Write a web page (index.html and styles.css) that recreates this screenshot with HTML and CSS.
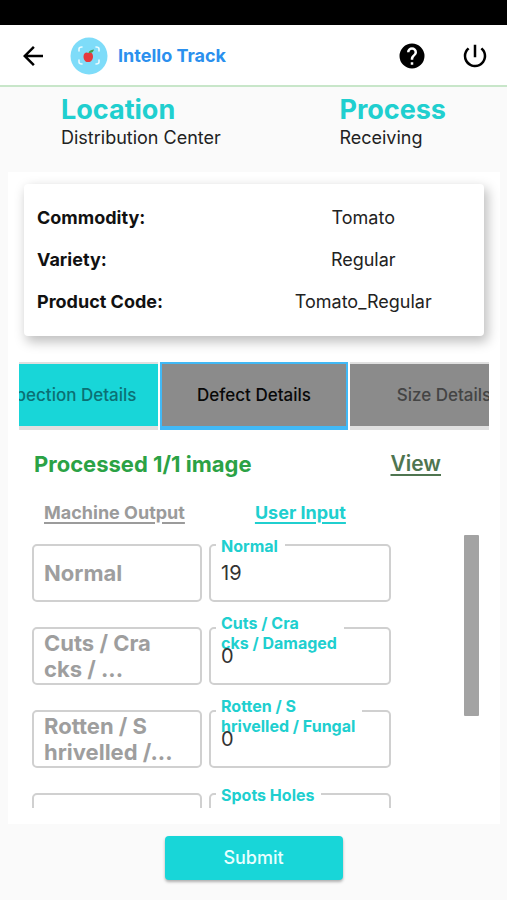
FILE: index.html
```html
<!DOCTYPE html>
<html lang="en">
<head>
<meta charset="utf-8">
<meta name="viewport" content="width=device-width, initial-scale=1">
<title>Intello Track</title>
<link rel="stylesheet" href="styles.css">
</head>
<body>
<div class="status-bar"></div>
<header class="app-bar">
  <button class="icon-button" type="button" aria-label="Back">
    <svg width="30" height="30" viewBox="0 0 24 24"><path d="M20 11H7.800l5.600-5.600L12 4l-8 8 8 8 1.400-1.400L7.800 13H20z"/></svg>
  </button>
  <svg class="logo" width="38" height="38" viewBox="0 0 38 38" aria-hidden="true">
    <circle cx="19" cy="19" r="18.500" fill="#7edcf9"/>
    <g fill="none" stroke="#e9fbff" stroke-width="1.600" stroke-linecap="round">
      <path d="M9 14v-2q0-2 3-2M26 10q3 0 3 2v2M9 23v2q0 2 3 2M26 27q3 0 3-2v-2"/>
    </g>
    <path d="M18.500 16c-2-1.200-5-.4-5 3.500 0 3.500 2.500 6 4.500 5.500 2.500.5 5-2 5-5.500 0-3.900-2.500-4.700-4.500-3.500z" fill="#e5393d"/>
    <path d="M18.500 16q.3-3 5.500-3.500-1 4-5.500 3.500z" fill="#43a047"/>
  </svg>
  <h1 class="brand">Intello Track</h1>
  <button class="icon-button" type="button" aria-label="Help">
    <svg width="30" height="30" viewBox="0 0 24 24"><path d="M12 2a10 10 0 1 0 0 20 10 10 0 0 0 0-20zm1 17h-2v-2h2zm2.070-7.750-.9.920C13.450 12.900 13 13.500 13 15h-2v-.5c0-1.100.45-2.100 1.170-2.830l1.240-1.260c.37-.36.59-.86.59-1.410a2 2 0 0 0-4 0H8a4 4 0 0 1 8 0c0 .880-.36 1.680-.93 2.250z"/></svg>
  </button>
  <button class="icon-button" type="button" aria-label="Log out">
    <svg width="30" height="30" viewBox="0 0 24 24"><path d="M13 3h-2v10h2zm4.830 2.170-1.420 1.420A6.920 6.920 0 0 1 19 12a7 7 0 1 1-11.420-5.420L6.170 5.170A8.930 8.930 0 0 0 3 12a9 9 0 1 0 14.830-6.830z"/></svg>
  </button>
</header>

<section class="context">
  <div><h2>Location</h2><p>Distribution Center</p></div>
  <div><h2>Process</h2><p>Receiving</p></div>
</section>

<main class="panel">
  <dl class="product">
    <dt>Commodity:</dt><dd>Tomato</dd>
    <dt>Variety:</dt><dd>Regular</dd>
    <dt>Product Code:</dt><dd>Tomato_Regular</dd>
  </dl>

  <nav class="tabs">
    <button class="tab tab-done" type="button">Inspection Details</button>
    <button class="tab tab-active" type="button">Defect Details</button>
    <button class="tab" type="button">Size Details</button>
  </nav>

  <div class="progress"><strong>Processed 1/1 image</strong><a href="#view">View</a></div>
  <div class="columns"><span>Machine Output</span><span class="user">User Input</span></div>

  <div class="scroller">
    <div class="fields">
      <div class="output"><span>Normal</span></div>
      <div class="field"><label for="normal">Normal</label><input id="normal" value="19"></div>
      <div class="output"><span>Cuts / Cra<br>cks / ...</span></div>
      <div class="field"><label class="tall" for="cuts">Cuts / Cra<br>cks / Damaged</label><input id="cuts" value="0"></div>
      <div class="output"><span>Rotten / S<br>hrivelled /...</span></div>
      <div class="field"><label class="tall" for="rotten">Rotten / S<br>hrivelled / Fungal</label><input id="rotten" value="0"></div>
      <div class="output"></div>
      <div class="field"><label for="spots">Spots Holes</label><input id="spots"></div>
    </div>
    <div class="thumb"></div>
  </div>
</main>

<footer class="actions"><button class="submit" type="submit">Submit</button></footer>
</body>
</html>
```
FILE: styles.css
```css
* { box-sizing: border-box; }
body {
  margin: 0;
  min-height: 100vh;
  display: flex;
  flex-direction: column;
  background: #fafafa;
  color: #222;
  font-family: Inter, "Liberation Sans", sans-serif;
  font-size: 18px;
  line-height: 24px;
}
h1, h2, p, dl, dd { margin: 0; }
button { font: inherit; border: 0; padding: 0; }

.status-bar { height: 25px; background: #000; }
.app-bar {
  display: flex;
  align-items: center;
  height: 62px;
  padding: 2px 17px 0 18px;
  background: #fff;
  border-bottom: 2px solid #c8e6c9;
}
.icon-button { display: flex; justify-content: center; width: 30px; background: none; }
.icon-button + .icon-button { margin-left: 33px; }
.logo { margin: 0 10px 0 22px; }
.brand { flex: 1; font-size: 18px; font-weight: 700; color: #2b90ee; }

.context {
  display: flex;
  justify-content: space-between;
  padding: 7px 61px 0;
}
.context h2 { font-size: 27px; line-height: 32px; font-weight: 700; color: #20cfcf; }

.panel { margin: 22px 7px 0 8px; padding: 12px 11px 16px; background: #fff; }
.product {
  display: grid;
  grid-template-columns: 1fr 1fr;
  align-items: center;
  margin: 0 5px;
  padding: 13px 12px 13px 13px;
  grid-auto-rows: 42px;
  border-radius: 4px;
  background: #fff;
  box-shadow: 3px 5px 12px 1px rgba(0, 0, 0, .25);
}
.product dt { font-weight: 700; color: #111; }
.product dd { text-align: center; }

.tabs { display: flex; justify-content: center; gap: 2px; margin-top: 26px; overflow: hidden; }
.tab {
  flex: 0 0 188px;
  height: 68px;
  border: solid #e0e0e0;
  border-width: 2px 0 4px;
  background: #8b8b8b;
  color: #444;
  font-size: 17px;
  font-weight: 500;
}
.tab-done { background: #18d6d8; color: #0b7074; }
.tab-active { border-color: #41b9f6; border-width: 2px 2px 4px; color: #080808; }

.progress {
  display: flex;
  justify-content: space-between;
  margin: 20px 48px 0 15px;
  font-size: 22px;
  line-height: 28px;
  font-weight: 700;
}
.progress strong { font-weight: 700; color: #2ba245; }
.progress a { font-size: 21px; font-weight: 600; color: #4f7550; }
.progress a, .columns span { text-decoration-thickness: 2px; text-underline-offset: 3px; }
.columns {
  display: flex;
  gap: 70px;
  margin: 23px 25px 0;
  font-weight: 700;
  color: #9b9b9b;
}
.columns span { text-decoration-line: underline; }
.columns .user { color: #20cfcf; }

.scroller {
  display: flex;
  justify-content: space-between;
  height: 273px;
  margin: 10px 10px 0 13px;
  overflow: hidden;
}
.fields {
  flex: 0 1 359px;
  display: grid;
  grid-template-columns: 170fr 182fr;
  grid-auto-rows: 58px;
  gap: 25px 7px;
  padding-top: 9px;
}
.output, .field { border: 2px solid #d0d0d0; border-radius: 5px; }
.output {
  display: flex;
  align-items: center;
  padding-left: 10px;
  font-size: 22px;
  line-height: 26px;
  font-weight: 700;
  color: #9e9e9e;
}
.field { position: relative; }
.field label {
  position: absolute;
  top: -10px;
  left: 5px;
  padding: 0 7px 0 5px;
  background: #fff;
  font-size: 16px;
  line-height: 20px;
  font-weight: 700;
  white-space: nowrap;
  color: #20cfcf;
}
.field .tall { top: -16px; }
.field input {
  position: relative;
  width: 100%;
  height: 100%;
  padding: 0 10px;
  border: 0;
  outline: 0;
  background: none;
  color: #333;
  font: inherit;
  font-size: 20px;
}
.thumb { width: 15px; height: 181px; border-radius: 1px; background: #a3a3a3; }

.actions { display: flex; justify-content: center; padding: 12px 0 19px; }
.submit {
  width: 178px;
  height: 44px;
  border-radius: 4px;
  background: #18d6d8;
  color: #e9ffff;
  font-weight: 500;
  box-shadow: 0 2px 3px rgba(0, 0, 0, .3);
}
```
